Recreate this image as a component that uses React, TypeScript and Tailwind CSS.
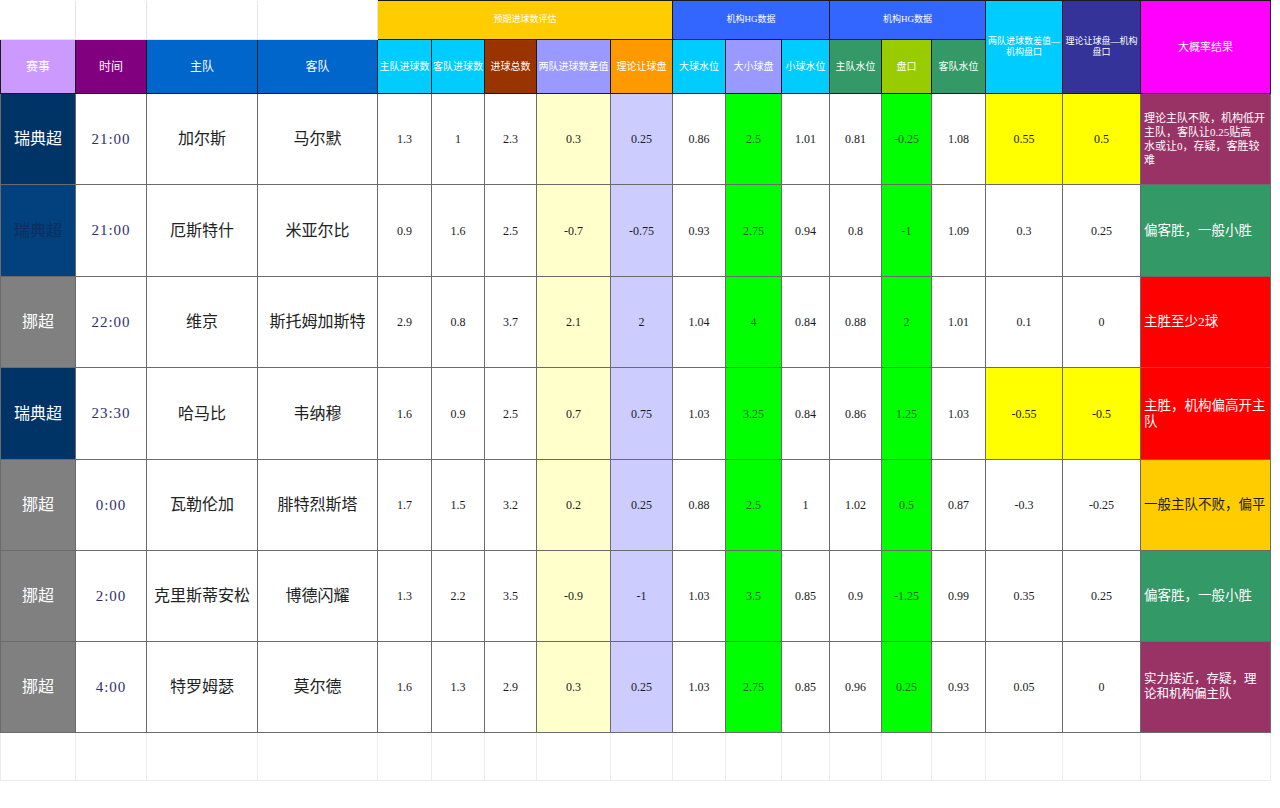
import React from 'react';

type Row = {
  league: string;
  leagueBg: string;
  leagueText: string;
  time: string;
  home: string;
  away: string;
  nums: string[];
  diff: [string, string];
  diffBg?: string;
  result: string;
  resultBg: string;
  resultText: string;
  resultSize: string;
  h: string;
};

const widths = [75, 71, 111, 120, 54, 53, 52, 74, 62, 53, 56, 48, 52, 50, 54, 77, 78, 130];

const rows: Row[] = [
  {
    league: '瑞典超', leagueBg: 'bg-[#003366]', leagueText: 'text-white', time: '21:00', home: '加尔斯', away: '马尔默',
    nums: ['1.3', '1', '2.3', '0.3', '0.25', '0.86', '2.5', '1.01', '0.81', '-0.25', '1.08'],
    diff: ['0.55', '0.5'], diffBg: 'bg-[#ffff00]',
    result: '理论主队不败，机构低开\n主队，客队让0.25贴高\n水或让0，存疑，客胜较\n难',
    resultBg: 'bg-[#993366]', resultText: 'text-white', resultSize: 'text-[11px] leading-[14px]', h: 'h-[91px]',
  },
  {
    league: '瑞典超', leagueBg: 'bg-[#03407e]', leagueText: 'text-[#0b2f5e]', time: '21:00', home: '厄斯特什', away: '米亚尔比',
    nums: ['0.9', '1.6', '2.5', '-0.7', '-0.75', '0.93', '2.75', '0.94', '0.8', '-1', '1.09'],
    diff: ['0.3', '0.25'],
    result: '偏客胜，一般小胜',
    resultBg: 'bg-[#339966]', resultText: 'text-white', resultSize: 'text-[13.5px] leading-[16px]', h: 'h-[92px]',
  },
  {
    league: '挪超', leagueBg: 'bg-[#808080]', leagueText: 'text-white', time: '22:00', home: '维京', away: '斯托姆加斯特',
    nums: ['2.9', '0.8', '3.7', '2.1', '2', '1.04', '4', '0.84', '0.88', '2', '1.01'],
    diff: ['0.1', '0'],
    result: '主胜至少2球',
    resultBg: 'bg-[#ff0000]', resultText: 'text-white', resultSize: 'text-[13.5px] leading-[16px]', h: 'h-[91px]',
  },
  {
    league: '瑞典超', leagueBg: 'bg-[#003366]', leagueText: 'text-white', time: '23:30', home: '哈马比', away: '韦纳穆',
    nums: ['1.6', '0.9', '2.5', '0.7', '0.75', '1.03', '3.25', '0.84', '0.86', '1.25', '1.03'],
    diff: ['-0.55', '-0.5'], diffBg: 'bg-[#ffff00]',
    result: '主胜，机构偏高开主队',
    resultBg: 'bg-[#ff0000]', resultText: 'text-white', resultSize: 'text-[13.5px] leading-[16px]', h: 'h-[92px]',
  },
  {
    league: '挪超', leagueBg: 'bg-[#808080]', leagueText: 'text-white', time: '0:00', home: '瓦勒伦加', away: '腓特烈斯塔',
    nums: ['1.7', '1.5', '3.2', '0.2', '0.25', '0.88', '2.5', '1', '1.02', '0.5', '0.87'],
    diff: ['-0.3', '-0.25'],
    result: '一般主队不败，偏平',
    resultBg: 'bg-[#ffcc00]', resultText: 'text-[#1a1a1a]', resultSize: 'text-[13.5px] leading-[16px]', h: 'h-[91px]',
  },
  {
    league: '挪超', leagueBg: 'bg-[#808080]', leagueText: 'text-white', time: '2:00', home: '克里斯蒂安松', away: '博德闪耀',
    nums: ['1.3', '2.2', '3.5', '-0.9', '-1', '1.03', '3.5', '0.85', '0.9', '-1.25', '0.99'],
    diff: ['0.35', '0.25'],
    result: '偏客胜，一般小胜',
    resultBg: 'bg-[#339966]', resultText: 'text-white', resultSize: 'text-[13.5px] leading-[16px]', h: 'h-[91px]',
  },
  {
    league: '挪超', leagueBg: 'bg-[#808080]', leagueText: 'text-white', time: '4:00', home: '特罗姆瑟', away: '莫尔德',
    nums: ['1.6', '1.3', '2.9', '0.3', '0.25', '1.03', '2.75', '0.85', '0.96', '0.25', '0.93'],
    diff: ['0.05', '0'],
    result: '实力接近，存疑，理论和机构偏主队',
    resultBg: 'bg-[#993366]', resultText: 'text-white', resultSize: 'text-[12.5px] leading-[15px]', h: 'h-[91px]',
  },
];

// background for each numeric column (index in nums)
const numBg = ['', '', '', 'bg-[#ffffcc]', 'bg-[#ccccff]', '', 'bg-[#00ff00]', '', '', 'bg-[#00ff00]', ''];

const subHeaders: { label: string; bg: string }[] = [
  { label: '主队进球数', bg: 'bg-[#00ccff]' },
  { label: '客队进球数', bg: 'bg-[#00ccff]' },
  { label: '进球总数', bg: 'bg-[#993300]' },
  { label: '两队进球数差值', bg: 'bg-[#9999ff]' },
  { label: '理论让球盘', bg: 'bg-[#ff9900]' },
  { label: '大球水位', bg: 'bg-[#00ccff]' },
  { label: '大小球盘', bg: 'bg-[#9999ff]' },
  { label: '小球水位', bg: 'bg-[#00ccff]' },
  { label: '主队水位', bg: 'bg-[#339966]' },
  { label: '盘口', bg: 'bg-[#99cc00]' },
  { label: '客队水位', bg: 'bg-[#339966]' },
];

const td = 'border border-[#6b6b6b] text-center align-middle p-0';
const th = 'border border-[#1a1a1a] text-center align-middle p-0 font-normal text-white';

export default function App() {
  return (
    <div className="w-[1280px] h-[808px] bg-white overflow-hidden font-['Liberation_Serif','Noto_Sans_CJK_SC',serif]">
      <table className="table-fixed border-collapse w-[1270px]">
        <colgroup>
          {widths.map((w, i) => (
            <col key={i} style={{ width: w }} />
          ))}
        </colgroup>
        <thead>
          <tr className="h-[39px]">
            <th className="border border-[#e4e4e4] border-t-0 border-l-0 bg-white" />
            <th className="border border-[#e4e4e4] border-t-0 bg-white" />
            <th className="border border-[#e4e4e4] border-t-0 bg-white" />
            <th className="border border-[#e4e4e4] border-t-0 bg-white" />
            <th colSpan={5} className={`${th} bg-[#ffcc00] text-[9px]`}>预期进球数评估</th>
            <th colSpan={3} className={`${th} bg-[#3366ff] text-[9px]`}>机构HG数据</th>
            <th colSpan={3} className={`${th} bg-[#3366ff] text-[9px]`}>机构HG数据</th>
            <th rowSpan={2} className={`${th} bg-[#00ccff] text-[9px] leading-[11px] px-[2px]`}>
              两队进球数差值—
              <br />
              机构盘口
            </th>
            <th rowSpan={2} className={`${th} bg-[#333399] text-[9px] leading-[11px] px-[2px]`}>
              理论让球盘—机构
              <br />
              盘口
            </th>
            <th rowSpan={2} className={`${th} bg-[#ff00ff] text-[11px]`}>大概率结果</th>
          </tr>
          <tr className="h-[54px]">
            <th className={`${th} bg-[#cc99ff] text-[12px]`}>赛事</th>
            <th className={`${th} bg-[#800080] text-[12px]`}>时间</th>
            <th className={`${th} bg-[#0066cc] text-[12px]`}>主队</th>
            <th className={`${th} bg-[#0066cc] text-[12px]`}>客队</th>
            {subHeaders.map((s) => (
              <th key={s.label} className={`${th} ${s.bg} text-[10px] whitespace-nowrap`}>
                {s.label}
              </th>
            ))}
          </tr>
        </thead>
        <tbody>
          {rows.map((r, ri) => (
            <tr key={ri} className={r.h}>
              <td className={`${td} ${r.leagueBg} ${r.leagueText} text-[16px] border-[#1a1a1a]`}>{r.league}</td>
              <td className={`${td} text-[15px] tracking-[1px] text-[#2e2e6e]`}>{r.time}</td>
              <td className={`${td} text-[16px] text-[#222]`}>{r.home}</td>
              <td className={`${td} text-[16px] text-[#222] whitespace-nowrap`}>{r.away}</td>
              {r.nums.map((n, ni) => (
                <td
                  key={ni}
                  className={`${td} ${numBg[ni]} text-[12px] ${
                    numBg[ni] === 'bg-[#00ff00]' ? 'text-[#2a5a2a]' : 'text-[#1a1a1a]'
                  }`}
                >
                  {n}
                </td>
              ))}
              <td className={`${td} ${r.diffBg ?? ''} text-[12px] text-[#1a1a1a]`}>{r.diff[0]}</td>
              <td className={`${td} ${r.diffBg ?? ''} text-[12px] text-[#1a1a1a]`}>{r.diff[1]}</td>
              <td
                className={`${td} ${r.resultBg} ${r.resultText} ${r.resultSize} text-left px-[3px] whitespace-pre-line border-[#1a1a1a]`}
              >
                {r.result}
              </td>
            </tr>
          ))}
          <tr className="h-[48px]">
            {widths.map((_, i) => (
              <td key={i} className="border border-[#ececec] border-t-[#9a9a9a] p-0" />
            ))}
          </tr>
        </tbody>
      </table>
    </div>
  );
}
